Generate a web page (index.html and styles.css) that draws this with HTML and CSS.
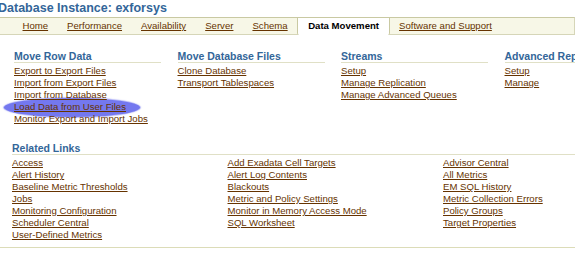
FILE: index.html
```html
<!DOCTYPE html>
<html>
<head>
<meta charset="utf-8">
<link rel="stylesheet" href="styles.css">
</head>
<body>
<div class="page">
  <div class="highlight"></div>
  <h1 class="title">Database Instance: exforsys</h1>
  <div class="tabbar">
    <a class="tab" href="#">Home</a>
    <a class="tab" href="#">Performance</a>
    <a class="tab" href="#">Availability</a>
    <a class="tab" href="#">Server</a>
    <a class="tab" href="#">Schema</a>
    <span class="tab tab-active">Data Movement</span>
    <a class="tab" href="#">Software and Support</a>
  </div>

  <div class="sections">
    <div class="section">
      <h2 class="heading">Move Row Data</h2>
      <ul class="links">
        <li><a href="#">Export to Export Files</a></li>
        <li><a href="#">Import from Export Files</a></li>
        <li><a href="#">Import from Database</a></li>
        <li><a href="#">Load Data from User Files</a></li>
        <li><a href="#">Monitor Export and Import Jobs</a></li>
      </ul>
    </div>
    <div class="section">
      <h2 class="heading">Move Database Files</h2>
      <ul class="links">
        <li><a href="#">Clone Database</a></li>
        <li><a href="#">Transport Tablespaces</a></li>
      </ul>
    </div>
    <div class="section">
      <h2 class="heading">Streams</h2>
      <ul class="links">
        <li><a href="#">Setup</a></li>
        <li><a href="#">Manage Replication</a></li>
        <li><a href="#">Manage Advanced Queues</a></li>
      </ul>
    </div>
    <div class="section">
      <h2 class="heading">Advanced Replication</h2>
      <ul class="links">
        <li><a href="#">Setup</a></li>
        <li><a href="#">Manage</a></li>
      </ul>
    </div>
  </div>

  <div class="related">
    <h2 class="heading">Related Links</h2>
    <div class="related-grid">
      <ul class="links">
        <li><a href="#">Access</a></li>
        <li><a href="#">Alert History</a></li>
        <li><a href="#">Baseline Metric Thresholds</a></li>
        <li><a href="#">Jobs</a></li>
        <li><a href="#">Monitoring Configuration</a></li>
        <li><a href="#">Scheduler Central</a></li>
        <li><a href="#">User-Defined Metrics</a></li>
      </ul>
      <ul class="links">
        <li><a href="#">Add Exadata Cell Targets</a></li>
        <li><a href="#">Alert Log Contents</a></li>
        <li><a href="#">Blackouts</a></li>
        <li><a href="#">Metric and Policy Settings</a></li>
        <li><a href="#">Monitor in Memory Access Mode</a></li>
        <li><a href="#">SQL Worksheet</a></li>
      </ul>
      <ul class="links">
        <li><a href="#">Advisor Central</a></li>
        <li><a href="#">All Metrics</a></li>
        <li><a href="#">EM SQL History</a></li>
        <li><a href="#">Metric Collection Errors</a></li>
        <li><a href="#">Policy Groups</a></li>
        <li><a href="#">Target Properties</a></li>
      </ul>
    </div>
  </div>
  <div class="footer-rule"></div>
</div>
</body>
</html>
```

FILE: styles.css
```css
html, body {
  margin: 0;
  padding: 0;
  background: #ffffff;
  overflow: hidden;
}
body {
  font-family: "Liberation Sans", Arial, sans-serif;
  font-size: 9.6px;
  color: #000;
}
.page {
  position: relative;
  width: 700px;
}
.title {
  margin: 0 0 0 -2px;
  padding-top: 1px;
  height: 16px;
  font-size: 12.5px;
  line-height: 15px;
  font-weight: bold;
  color: #336699;
  white-space: nowrap;
}
.tabbar {
  width: 561px;
  height: 16px;
  display: flex;
  align-items: stretch;
  background: #f7f7e7;
  border-top: 1px solid #c9c9a2;
  border-bottom: 1px solid #d6d6b8;
  border-right: 1px solid #d6d6b8;
  padding-left: 13px;
}
.tab {
  display: block;
  padding: 0 9.5px;
  line-height: 16px;
  color: #663300;
  white-space: nowrap;
}
.tab-active {
  background: #ffffff;
  color: #000;
  font-weight: bold;
  padding: 0 9.5px 0 10px;
  border-left: 1px solid #c9c9a2;
  border-right: 1px solid #c9c9a2;
  margin-bottom: -1px;
  height: 17px;
  border-bottom-left-radius: 2px;
  border-bottom-right-radius: 2px;
}
a {
  color: #663300;
  text-decoration: underline;
}
.sections {
  position: relative;
  z-index: 1;
  display: grid;
  grid-template-columns: repeat(4, 147px);
  column-gap: 16.5px;
  margin: 15px 0 0 14px;
}
.heading {
  margin: 0;
  font-size: 10.5px;
  line-height: 12px;
  font-weight: bold;
  color: #336699;
  border-bottom: 1px solid #e0e0c6;
  white-space: nowrap;
}
.links {
  list-style: none;
  margin: 0;
  padding: 2px 0 0 0;
}
.links li {
  line-height: 12px;
  height: 12px;
  white-space: nowrap;
}
.related {
  margin: 17px 0 0 12px;
  width: 650px;
}
.related-grid {
  display: grid;
  grid-template-columns: repeat(3, 215.5px);
}
.footer-rule {
  margin-top: 6px;
  width: 700px;
  border-top: 1px solid #dcdcb8;
}
.highlight {
  position: absolute;
  z-index: 0;
  left: 4px;
  top: 98px;
  width: 136px;
  height: 19px;
  border-radius: 50%;
  background: #7478ef;
  box-shadow: 0 0 1px 1px rgba(116, 120, 239, 0.5);
}
```
